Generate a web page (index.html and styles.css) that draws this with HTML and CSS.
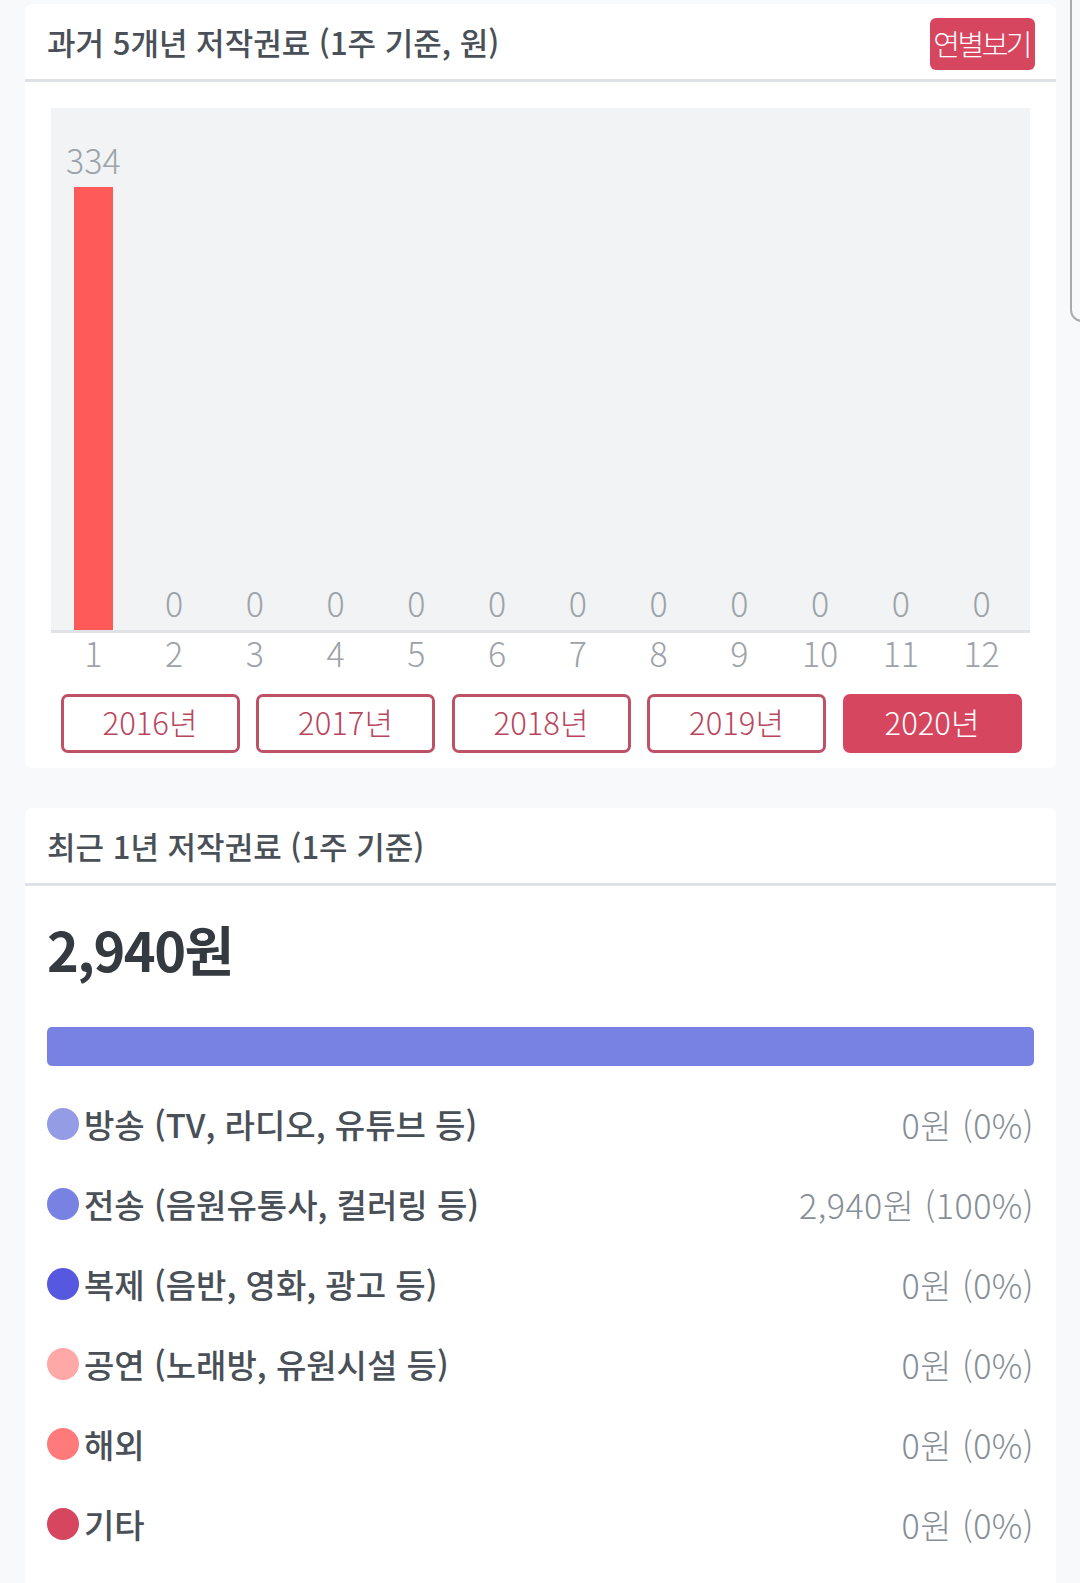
FILE: index.html
```html
<!DOCTYPE html>
<html lang="ko">
<head>
    <meta charset="UTF-8">
    <meta name="viewport" content="width=device-width, initial-scale=1.0">
    <title>저작권료</title>
    <link rel="stylesheet" href="styles.css">
</head>
<body>
    <div class="scroll-thumb"></div>

    <section class="card">
        <div class="card-head">
            <h2>과거 5개년 저작권료 (1주 기준, 원)</h2>
            <button class="btn-yearly">연별보기</button>
        </div>
        <div class="card-body chart-body">
            <div class="chart">
                <div class="col"><span class="val">334</span><div class="bar" style="height: 443px"></div></div>
                <div class="col"><span class="val">0</span></div>
                <div class="col"><span class="val">0</span></div>
                <div class="col"><span class="val">0</span></div>
                <div class="col"><span class="val">0</span></div>
                <div class="col"><span class="val">0</span></div>
                <div class="col"><span class="val">0</span></div>
                <div class="col"><span class="val">0</span></div>
                <div class="col"><span class="val">0</span></div>
                <div class="col"><span class="val">0</span></div>
                <div class="col"><span class="val">0</span></div>
                <div class="col"><span class="val">0</span></div>
            </div>
            <div class="months">
                <span>1</span><span>2</span><span>3</span><span>4</span><span>5</span><span>6</span>
                <span>7</span><span>8</span><span>9</span><span>10</span><span>11</span><span>12</span>
            </div>
            <div class="years">
                <button class="year">2016년</button>
                <button class="year">2017년</button>
                <button class="year">2018년</button>
                <button class="year">2019년</button>
                <button class="year active">2020년</button>
            </div>
        </div>
    </section>

    <section class="card">
        <div class="card-head">
            <h2>최근 1년 저작권료 (1주 기준)</h2>
        </div>
        <div class="card-body total-body">
            <div class="total">2,940원</div>
            <div class="stack">
                <div class="seg c2" style="width: 100%"></div>
            </div>
            <ul class="legend">
                <li><span class="dot c1"></span><span class="name">방송 (TV, 라디오, 유튜브 등)</span><span class="amount">0원 (0%)</span></li>
                <li><span class="dot c2"></span><span class="name">전송 (음원유통사, 컬러링 등)</span><span class="amount">2,940원 (100%)</span></li>
                <li><span class="dot c3"></span><span class="name">복제 (음반, 영화, 광고 등)</span><span class="amount">0원 (0%)</span></li>
                <li><span class="dot c4"></span><span class="name">공연 (노래방, 유원시설 등)</span><span class="amount">0원 (0%)</span></li>
                <li><span class="dot c5"></span><span class="name">해외</span><span class="amount">0원 (0%)</span></li>
                <li><span class="dot c6"></span><span class="name">기타</span><span class="amount">0원 (0%)</span></li>
            </ul>
        </div>
    </section>
</body>
</html>
```

FILE: styles.css
```css
* { margin: 0; padding: 0; box-sizing: border-box; }
body {
    font-family: "Noto Sans CJK KR", "Noto Sans", sans-serif;
    background: #f8f9fa;
    padding: 4px 24px 0 25px;
    color: #495057;
    overflow: hidden;
}
.scroll-thumb {
    position: fixed;
    left: 1070px;
    top: -12px;
    width: 24px;
    height: 334px;
    border: 2px solid #a9abad;
    border-radius: 12px;
    background: #f8f9fa;
}
.card {
    background: #fff;
    border-radius: 8px;
    margin-bottom: 40px;
}
.card-head {
    height: 78px;
    padding: 0 21px 0 22px;
    display: flex;
    align-items: center;
    justify-content: space-between;
    border-bottom: 3px solid #dee2e6;
}
.card-head h2 {
    font-size: 31px;
    font-weight: 500;
    color: #495057;
}
.btn-yearly {
    font-family: inherit;
    font-size: 29px;
    font-weight: 300;
    color: #fff;
    background: #d6465f;
    border: none;
    border-radius: 6px;
    height: 52px;
    margin-top: 4px;
    padding: 0 5px 2px 3px;
    letter-spacing: -2.5px;
}

/* chart */
.chart-body { padding: 26px 26px 15px; }
.chart {
    height: 525px;
    background: #f1f3f5;
    border-bottom: 3px solid #dfe2e6;
    display: flex;
    padding: 0 8px 0 2px;
}
.col {
    flex: 1;
    display: flex;
    flex-direction: column;
    align-items: center;
    justify-content: flex-end;
}
.val {
    font-size: 34px;
    font-weight: 300;
    line-height: 40px;
    color: #9da3a8;
    margin-bottom: 7px;
}
.bar {
    width: 39px;
    background: #ff5a5a;
}
.months {
    display: flex;
    padding: 0 8px 0 2px;
}
.months span {
    flex: 1;
    text-align: center;
    font-size: 34px;
    font-weight: 300;
    line-height: 40px;
    color: #9da3a8;
}
.years {
    display: flex;
    gap: 16.5px;
    padding-left: 9.5px;
    margin-top: 21px;
}
.year {
    width: 179px;
    height: 59px;
    padding-bottom: 4px;
    font-family: inherit;
    font-size: 31px;
    font-weight: 300;
    color: #b8475d;
    background: #fff;
    border: 3px solid #bd5166;
    border-radius: 7px;
}
.year.active {
    background: #d6465f;
    border-color: #d6465f;
    color: #fff;
}

/* total */
.total-body { padding: 30px 22px 60px; }
.total {
    font-size: 54px;
    font-weight: 700;
    line-height: 65px;
    color: #343a40;
    letter-spacing: -1.5px;
}
.stack {
    margin-top: 46px;
    height: 39px;
    border-radius: 5px;
    overflow: hidden;
    display: flex;
}
.seg { height: 100%; }
.legend {
    list-style: none;
    margin-top: 18px;
}
.legend li {
    height: 80px;
    display: flex;
    align-items: center;
}
.dot {
    width: 32px;
    height: 32px;
    border-radius: 50%;
    margin-right: 5px;
}
.name {
    font-size: 33px;
    font-weight: 500;
    color: #495057;
}
.amount {
    margin-left: auto;
    font-size: 34px;
    font-weight: 300;
    color: #868e96;
    letter-spacing: 0.5px;
}
.c1 { background: #959ce6; }
.c2 { background: #7882e3; }
.c3 { background: #5659df; }
.c4 { background: #ffa8a8; }
.c5 { background: #ff7b7b; }
.c6 { background: #d6465f; }
```
